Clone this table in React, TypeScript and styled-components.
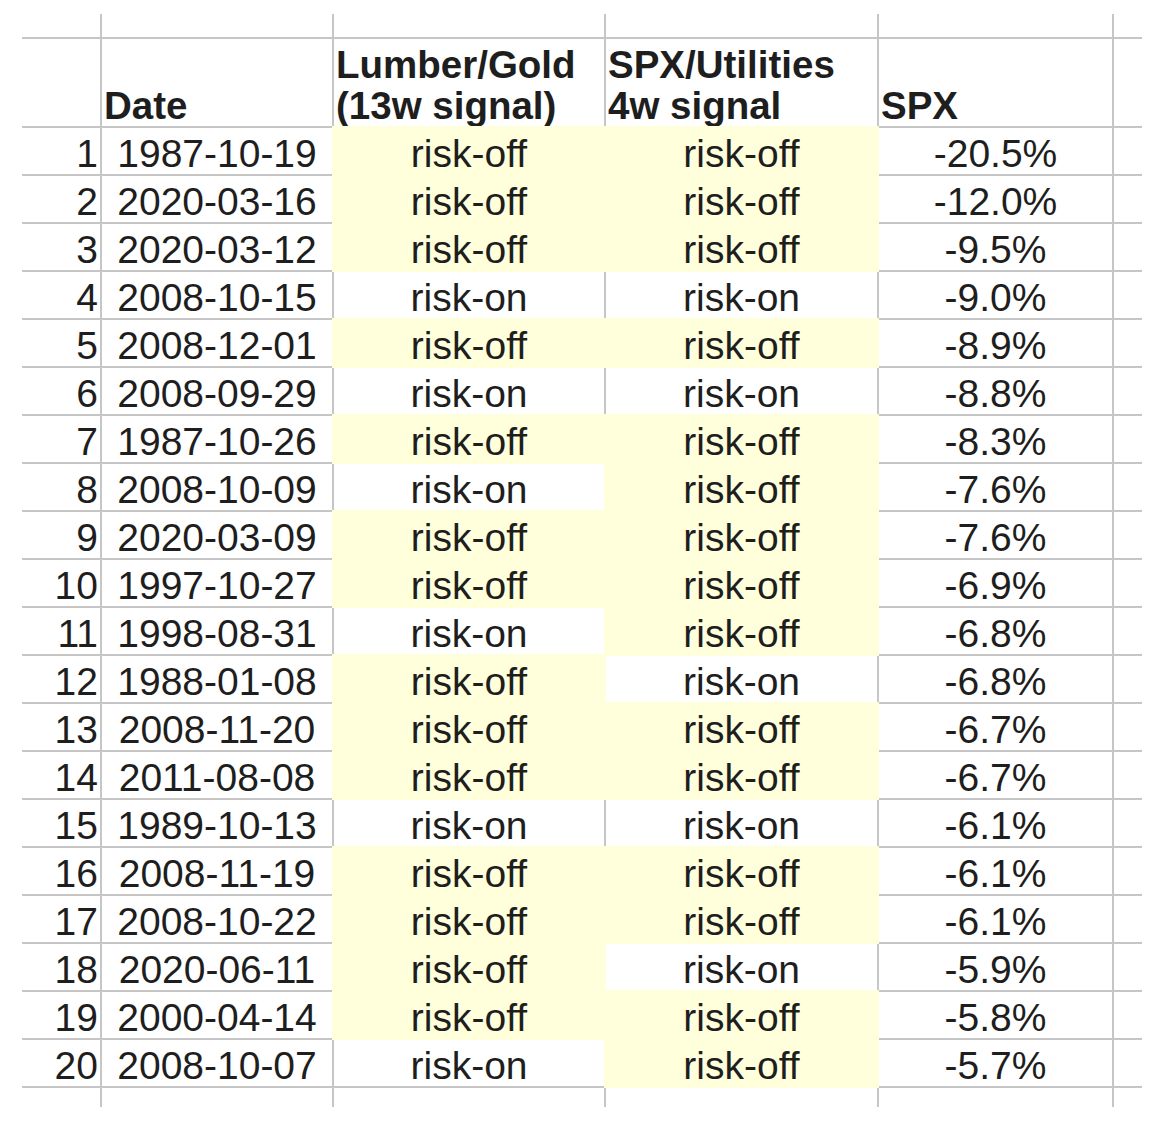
import React from 'react'
import styled, { createGlobalStyle, css } from 'styled-components'

const GRID = '#c6c6c6'
const FILL = '#ffffdc'
const INK = '#1e1e1e'

const GlobalStyle = createGlobalStyle`
  html, body {
    margin: 0;
    padding: 0;
    background: #ffffff;
  }
  body {
    font-family: "Liberation Sans", Arial, sans-serif;
    color: ${INK};
  }
`

const Sheet = styled.div`
  display: grid;
  grid-template-columns: 80px 232px 272px 273px 235px 28px;
  grid-template-rows: 25px 89px repeat(20, 48px) 19px;
  width: 1120px;
  margin: 14px 0 0 22px;

  /* the sheet is cropped mid-column on the right: no closing line */
  & > div:nth-child(6n) {
    border-right: none;
  }
`

type Align = 'left' | 'center' | 'right'

const justify: Record<Align, string> = {
  left: 'flex-start',
  center: 'center',
  right: 'flex-end'
}

// filled cells hide the grid lines on every side, like a spreadsheet does
const Cell = styled.div<{ $fill?: boolean; $align?: Align; $head?: boolean; $last?: boolean }>`
  box-sizing: border-box;
  display: flex;
  align-items: flex-end;
  justify-content: ${({ $align = 'left' }) => justify[$align]};
  padding: 0 2px;
  border-right: 2px solid ${GRID};
  border-bottom: ${({ $last }) => ($last ? 'none' : `2px solid ${GRID}`)};
  font-size: 39px;
  line-height: 40px;
  white-space: nowrap;
  ${({ $head }) =>
    $head &&
    css`
      font-size: 38.5px;
      font-weight: bold;
      line-height: 41px;
      white-space: pre-line;
    `}
  ${({ $fill }) =>
    $fill &&
    css`
      background: ${FILL};
      border-color: ${FILL};
      box-shadow: -2px -2px 0 0 ${FILL}, 0 -2px 0 0 ${FILL}, -2px 0 0 0 ${FILL};
    `}
`

type Row = [number, string, 'off' | 'on', 'off' | 'on', string]

const rows: Row[] = [
  [1, '1987-10-19', 'off', 'off', '-20.5%'],
  [2, '2020-03-16', 'off', 'off', '-12.0%'],
  [3, '2020-03-12', 'off', 'off', '-9.5%'],
  [4, '2008-10-15', 'on', 'on', '-9.0%'],
  [5, '2008-12-01', 'off', 'off', '-8.9%'],
  [6, '2008-09-29', 'on', 'on', '-8.8%'],
  [7, '1987-10-26', 'off', 'off', '-8.3%'],
  [8, '2008-10-09', 'on', 'off', '-7.6%'],
  [9, '2020-03-09', 'off', 'off', '-7.6%'],
  [10, '1997-10-27', 'off', 'off', '-6.9%'],
  [11, '1998-08-31', 'on', 'off', '-6.8%'],
  [12, '1988-01-08', 'off', 'on', '-6.8%'],
  [13, '2008-11-20', 'off', 'off', '-6.7%'],
  [14, '2011-08-08', 'off', 'off', '-6.7%'],
  [15, '1989-10-13', 'on', 'on', '-6.1%'],
  [16, '2008-11-19', 'off', 'off', '-6.1%'],
  [17, '2008-10-22', 'off', 'off', '-6.1%'],
  [18, '2020-06-11', 'off', 'on', '-5.9%'],
  [19, '2000-04-14', 'off', 'off', '-5.8%'],
  [20, '2008-10-07', 'on', 'off', '-5.7%']
]

const headers = ['', 'Date', 'Lumber/Gold\n(13w signal)', 'SPX/Utilities\n4w signal', 'SPX', '']

function EmptyRow({ last }: { last?: boolean }) {
  return (
    <>
      {headers.map((_, i) => (
        <Cell key={i} $last={last} />
      ))}
    </>
  )
}

export default function App() {
  return (
    <>
      <GlobalStyle />
      <Sheet>
        <EmptyRow />
        {headers.map((h, i) => (
          <Cell key={'h' + i} $head>
            {h}
          </Cell>
        ))}
        {rows.map(([n, date, lumber, utils, spx]) => (
          <React.Fragment key={n}>
            <Cell $align="right">{n}</Cell>
            <Cell $align="center">{date}</Cell>
            <Cell $align="center" $fill={lumber === 'off'}>
              risk-{lumber}
            </Cell>
            <Cell $align="center" $fill={utils === 'off'}>
              risk-{utils}
            </Cell>
            <Cell $align="center">{spx}</Cell>
            <Cell />
          </React.Fragment>
        ))}
        <EmptyRow last />
      </Sheet>
    </>
  )
}
